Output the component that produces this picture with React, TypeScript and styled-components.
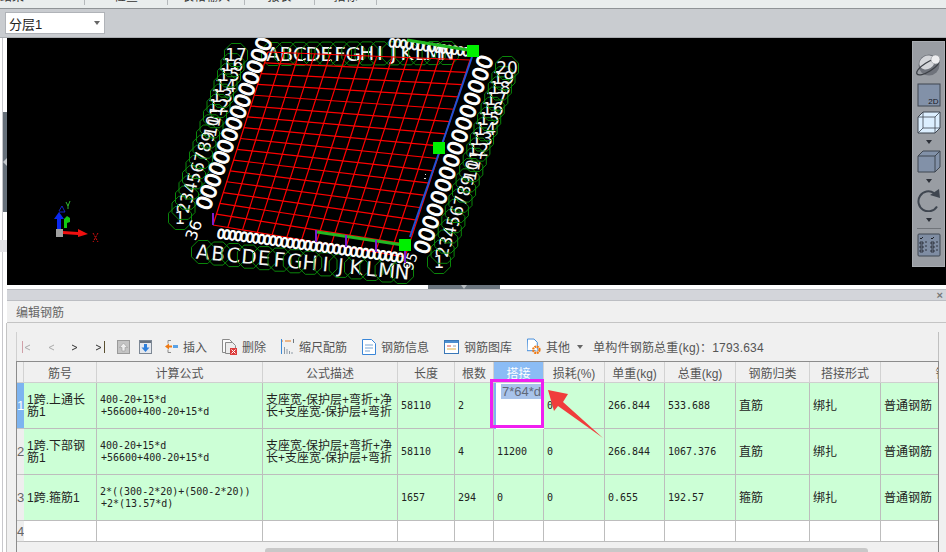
import React from 'react';
import styled, { createGlobalStyle } from 'styled-components';

const CJK = '"Liberation Sans", "Noto Sans CJK SC", sans-serif';
const MONO = '"DejaVu Sans Mono", "Noto Sans CJK SC", monospace';
const COLS = '7px 73px 166px 135px 57px 39px 50px 61px 60px 71px 74px 71px 158px';

const GlobalStyle = createGlobalStyle`
  html, body { margin: 0; padding: 0; background: #fff; }
  * { box-sizing: border-box; }
`;

const Page = styled.div`
  width: 946px;
  height: 552px;
  overflow: hidden;
  display: flex;
  flex-direction: column;
  font-family: ${CJK};
  font-size: 12px;
  background: #fff;
`;

const TabStrip = styled.div`
  height: 9px;
  display: flex;
  background: #e9eded;
  border-bottom: 1px solid #8f9396;
  overflow: hidden;
`;

const Tab = styled.div<{ $w: number; $left?: boolean }>`
  width: ${(p) => p.$w}px;
  height: 5px;
  border-right: 1px solid #b4b8bb;
  text-align: ${(p) => (p.$left ? 'left' : 'center')};
  color: #333;
  line-height: 12px;
  span {
    display: block;
    margin-top: -9px;
  }
`;

const LayerBar = styled.div`
  height: 29px;
  padding: 3px 5px 0;
  background: #c9ccd0;
  border-bottom: 1px solid #a9acb0;
`;

const LayerSelect = styled.div`
  width: 100px;
  height: 22px;
  background: #fff;
  border: 1px solid #b0b3b8;
  display: flex;
  align-items: center;
  justify-content: space-between;
  padding: 0 4px 0 3px;
  font-size: 13px;
  color: #222;
`;

const Caret = styled.i<{ $color?: string }>`
  display: block;
  width: 0;
  height: 0;
  border-left: 3px solid transparent;
  border-right: 3px solid transparent;
  border-top: 4px solid ${(p) => p.$color || '#666'};
`;

const Main = styled.div`
  flex: 1;
  display: flex;
  min-height: 0;
`;

const SideStrip = styled.div`
  width: 7px;
  padding-left: 2px;
  background: #fff;
`;

const SideRail = styled.div`
  height: 100%;
  border-left: 1px solid #c8c8cc;
  padding-top: 74px;
`;

const SideHandle = styled.div`
  width: 4px;
  height: 100px;
  background: #66707a;
  display: flex;
  align-items: center;
  &::before {
    content: '';
    border-top: 4px solid transparent;
    border-bottom: 4px solid transparent;
    border-right: 4px solid #c4c8cc;
  }
`;

const SideTab = styled.div`
  width: 7px;
  height: 12px;
  margin: 28px 0 0 -3px;
  background: #e2e2e6;
`;

const Content = styled.div`
  flex: 1;
  min-width: 0;
  display: flex;
  flex-direction: column;
`;

const Viewport = styled.div`
  position: relative;
  height: 247px;
  background: #000;
  svg.scene {
    display: block;
  }
`;

const ViewTools = styled.div`
  position: absolute;
  top: 3px;
  right: 1px;
  width: 33px;
  height: 226px;
  padding-top: 9px;
  background: #999da3;
  border: 1px solid #a8acb1;
  display: flex;
  flex-direction: column;
  align-items: center;
  gap: 4px;
`;

const ToolCaret = styled.div`
  height: 8px;
  display: flex;
  align-items: center;
`;

const ToolRule = styled.div`
  width: 24px;
  height: 1px;
  background: #70747a;
`;

const SplitBar = styled.div`
  height: 4px;
  background: #fff;
  padding-left: 421px;
`;

const SplitGrip = styled.div`
  width: 72px;
  height: 4px;
  background: #6d7780;
  display: flex;
  justify-content: center;
`;

const PanelHead = styled.div`
  height: 12px;
  background: #d3d5da;
  border-top: 1px solid #bcbec3;
  border-bottom: 1px solid #bcbec3;
  display: flex;
  justify-content: flex-end;
  align-items: center;
  padding-right: 3px;
  color: #777;
  font-size: 11px;
  font-weight: bold;
  line-height: 10px;
`;

const PanelTitle = styled.div`
  height: 22px;
  background: #f0f0f0;
  border-bottom: 1px solid #c4c4c4;
  padding-left: 9px;
  display: flex;
  align-items: center;
  color: #666;
`;

const PanelBody = styled.div`
  flex: 1;
  background: #f0f0f0;
  padding: 9px 7px 0 9px;
  display: flex;
  flex-direction: column;
  border-left: 1px solid #c4c4c4;
  margin-left: -1px;
`;

const Toolbar = styled.div`
  height: 29px;
  padding-left: 5px;
  display: flex;
  align-items: center;
  gap: 15px;
  border-left: 1px solid #d0d0d0;
  border-right: 1px solid #c0c0c0;
  color: #555;
  white-space: nowrap;
`;

const NavGroup = styled.div`
  display: flex;
  align-items: center;
  margin-right: -16px;
`;

const NavButton = styled.div`
  width: 24px;
  display: flex;
  justify-content: flex-start;
`;

const MoveButton = styled.div`
  display: flex;
  margin-right: -2px;
  svg + svg {
    margin-left: 9px;
  }
`;

const ToolButton = styled.div`
  display: flex;
  align-items: center;
  gap: 5px;
`;

const MoreCaret = styled.span`
  margin: 0 -5px 0 -8px;
`;

const TotalWeight = styled.span`
  letter-spacing: 0.2px;
`;

const TableWrap = styled.div`
  position: relative;
  flex: 1;
  overflow: hidden;
  border-left: 1px solid #8c8c8c;
  border-right: 1px solid #8c8c8c;
  border-top: 1px solid #8c8c8c;
`;

const Row = styled.div<{ $h: number }>`
  display: grid;
  grid-template-columns: ${COLS};
  height: ${(p) => p.$h}px;
`;

const HeadCell = styled.div<{ $active?: boolean }>`
  display: flex;
  align-items: center;
  justify-content: center;
  white-space: nowrap;
  overflow: hidden;
  background: ${(p) => (p.$active ? '#8bbcf5' : '#f0f0f0')};
  color: ${(p) => (p.$active ? '#fff' : '#555')};
  border-right: 1px solid #d2d2d2;
  border-bottom: 1px solid #cfcfcf;
`;

const RowNo = styled.div<{ $active?: boolean }>`
  display: flex;
  align-items: center;
  justify-content: center;
  overflow: hidden;
  font-size: 13px;
  background: ${(p) => (p.$active ? '#7db4f0' : '#eeeeee')};
  color: ${(p) => (p.$active ? '#fff' : '#666')};
  border-bottom: 1px solid #c4c4c4;
`;

const Cell = styled.div<{ $mono?: boolean; $empty?: boolean }>`
  display: flex;
  align-items: center;
  padding-left: 3px;
  white-space: nowrap;
  overflow: hidden;
  background: ${(p) => (p.$empty ? '#fff' : '#ccffd6')};
  color: #222;
  font-family: ${(p) => (p.$mono ? MONO : CJK)};
  font-size: ${(p) => (p.$mono ? '10px' : '12px')};
  line-height: 12px;
  border-right: 1px solid #bdbdbd;
  border-bottom: 1px solid #bdbdbd;
`;

const FormulaTail = styled.div`
  padding-left: 1px;
`;

const EditCell = styled.div`
  background: #fff;
  padding: 1px 0 0 5px;
  border-left: 2px solid #7db4f0;
  font-size: 13px;
  line-height: 15px;
  color: #5f6878;
`;

const Selected = styled.span`
  display: inline-block;
  background: #a8c3ea;
  padding: 0 1px;
`;

const Highlight = styled.div`
  position: absolute;
  left: 473px;
  top: 17px;
  width: 54px;
  height: 49px;
  border: 3px solid #f01ff0;
`;

const Pointer = styled.svg`
  position: absolute;
  left: 529px;
  top: 24px;
`;

const ScrollThumb = styled.div`
  position: absolute;
  left: 248px;
  top: 186px;
  width: 603px;
  height: 6px;
  background: #c8c8c8;
  border-radius: 3px 3px 0 0;
`;

type Pt = [number, number];

const lerp = (a: Pt, b: Pt, t: number): Pt => [a[0] + (b[0] - a[0]) * t, a[1] + (b[1] - a[1]) * t];

const TL: Pt = [268, 52];
const TR: Pt = [470, 60];
const BL: Pt = [213, 225];
const BR: Pt = [405, 257];

const octagon = ([x, y]: Pt, r: number) =>
  Array.from({ length: 8 }, (_, i) => {
    const a = Math.PI / 8 + (i * Math.PI) / 4;
    return `${(x + r * Math.cos(a)).toFixed(1)},${(y + r * Math.sin(a)).toFixed(1)}`;
  }).join(' ');

const LETTERS = 'ABCDEFGHIJKLMN'.split('');
const NUM = (n: number) => Array.from({ length: n }, (_, i) => String(i + 1));

function Bubbles({ from, to, labels, size, turn }: { from: Pt; to: Pt; labels: string[]; size: number; turn: (i: number) => number }) {
  return (
    <>
      {labels.map((label, i) => {
        const p = lerp(from, to, i / (labels.length - 1));
        return (
          <g key={label}>
            <polygon points={octagon(p, 12.5)} fill="none" stroke="#0a860a" strokeWidth="1" />
            <text
              x={p[0]}
              y={p[1]}
              fontSize={size}
              fill="#f4f4f4"
              textAnchor="middle"
              dominantBaseline="central"
              fontFamily='"DejaVu Sans", sans-serif'
              transform={`rotate(${turn(i)} ${p[0]} ${p[1]})`}
            >
              {label}
            </text>
          </g>
        );
      })}
    </>
  );
}

function Zeros({ from, to, n, size, angle, weight }: { from: Pt; to: Pt; n: number; size: number; angle: number; weight: number }) {
  return (
    <>
      {Array.from({ length: n }, (_, i) => {
        const p = lerp(from, to, i / (n - 1));
        return (
          <text
            key={i}
            x={p[0]}
            y={p[1]}
            fontSize={size}
            fill="#fff"
            stroke="#fff"
            strokeWidth={weight}
            textAnchor="middle"
            dominantBaseline="central"
            fontFamily='"DejaVu Sans", sans-serif'
            transform={`rotate(${angle} ${p[0]} ${p[1]})`}
          >
            0
          </text>
        );
      })}
    </>
  );
}

function Scene() {
  const rows = 16;
  const cols = 13;
  const side = (i: number) => (i > 0 && i < 11 ? -80 : 0);
  return (
    <svg className="scene" width="939" height="247" viewBox="7 38 939 247">
      <Bubbles from={[180, 218]} to={[236, 55]} labels={NUM(17)} size={17} turn={side} />
      <Bubbles from={[439, 262]} to={[507, 68]} labels={NUM(20)} size={17} turn={side} />
      <Bubbles from={[273, 54]} to={[447, 53]} labels={LETTERS} size={20} turn={() => 0} />
      <Bubbles from={[203, 252]} to={[402, 272]} labels={LETTERS} size={20} turn={() => 5} />

      {Array.from({ length: rows + 1 }, (_, i) => {
        const a = lerp(TL, BL, i / rows);
        const b = lerp(TR, BR, i / rows);
        return <line key={`h${i}`} x1={a[0]} y1={a[1]} x2={b[0]} y2={b[1]} stroke="#ff0000" strokeWidth="1.2" />;
      })}
      {Array.from({ length: cols + 1 }, (_, i) => {
        const a = lerp(TL, TR, i / cols);
        const b = lerp(BL, BR, i / cols);
        return <line key={`v${i}`} x1={a[0]} y1={a[1]} x2={b[0]} y2={b[1]} stroke="#ff0000" strokeWidth="1.2" />;
      })}

      <Zeros from={[205, 203]} to={[264, 44]} n={15} size={21} angle={-70} weight={1} />
      <Zeros from={[423, 247]} to={[485, 62]} n={16} size={21} angle={-70} weight={1} />
      <Zeros from={[221, 234]} to={[400, 258]} n={32} size={13} angle={8} weight={0.8} />
      <Zeros from={[392, 43]} to={[466, 52]} n={14} size={12} angle={8} weight={0.6} />
      <text x={199} y={232} fontSize="16" fill="#fff" textAnchor="middle" fontFamily='"DejaVu Sans", sans-serif' transform="rotate(-70 199 232)">36</text>
      <text x={415} y={263} fontSize="14" fill="#fff" textAnchor="middle" fontFamily='"DejaVu Sans", sans-serif' transform="rotate(-70 415 263)">95</text>

      <line x1="407" y1="40" x2="468" y2="50" stroke="#22b822" strokeWidth="3" />
      <line x1="317" y1="232" x2="403" y2="245" stroke="#22b822" strokeWidth="3" />
      <line x1="410" y1="237" x2="472" y2="57" stroke="#1f52d8" strokeWidth="2" />
      {[
        [213, 213],
        [316, 230],
        [346, 235],
        [376, 240],
        [405, 251],
      ].map(([x, y]) => (
        <line key={x} x1={x} y1={y} x2={x} y2={y + 12} stroke="#7a1fd0" strokeWidth="2" />
      ))}
      {[
        [473, 51],
        [439, 148],
        [405, 245],
      ].map(([x, y]) => (
        <rect key={x} x={x - 6} y={y - 6} width="12" height="12" fill="#00f000" />
      ))}
      <rect x="425" y="174" width="1" height="1" fill="#ddd" />
      <rect x="424" y="178" width="2" height="1" fill="#ddd" />

      <path d="M64 228v-9l3-3 3 2v4l-3 1v5z" fill="#12c812" />
      <path d="M57 229V219h-3l5-7 5 7h-3v10z" fill="#0a28f0" />
      <rect x="56" y="229" width="7" height="8" fill="#a0a0a0" />
      <path d="M63 231l15 1v-3l10 5-10 3v-2l-15-1z" fill="#f01010" />
      <path d="M59 211l3-5 3 6h-6" fill="none" stroke="#1a2cf0" strokeWidth="0.8" />
      <path d="M66 202l2 4 2-5M68 206v3" fill="none" stroke="#3ce83c" strokeWidth="0.8" />
      <path d="M93 233l5 9M98 233l-5 9" fill="none" stroke="#f01010" strokeWidth="0.9" strokeDasharray="2 1" />
    </svg>
  );
}

const GlobeIcon = () => (
  <svg width="28" height="28" viewBox="0 0 28 28">
    <circle cx="14" cy="14" r="10.5" fill="#6f737b" />
    <ellipse cx="12" cy="11.5" rx="8" ry="6.5" transform="rotate(-32 12 11.5)" fill="#d4d6da" />
    <ellipse cx="13" cy="16" rx="13" ry="4.5" transform="rotate(-32 13 16)" fill="none" stroke="#3c4046" strokeWidth="1.3" />
    <circle cx="20.5" cy="8.5" r="4.5" fill="#eeeef0" stroke="#8a8e94" strokeWidth="0.6" />
  </svg>
);

const ViewBox2D = () => (
  <svg width="24" height="24" viewBox="0 0 24 24">
    <rect x="1" y="1" width="22" height="22" fill="#8291a8" stroke="#3f4650" />
    <text x="21.5" y="21" fontSize="8" textAnchor="end" fill="#14181e" fontFamily='"Liberation Sans", sans-serif'>2D</text>
  </svg>
);

const WireCube = () => (
  <svg width="24" height="23" viewBox="0 0 24 23">
    <path d="M1 6l5-5h17v16l-5 5H1z" fill="#dcefff" stroke="#3f4650" />
    <path d="M1 6h17v16M18 6l5-5M6 1v16h17M6 17l-5 5" fill="none" stroke="#3f4650" strokeWidth="0.8" />
  </svg>
);

const SolidCube = () => (
  <svg width="24" height="23" viewBox="0 0 24 23">
    <path d="M1 6l5-5h17v16l-5 5H1z" fill="#8291a8" stroke="#3f4650" />
    <path d="M1 6h17v16M18 6l5-5" fill="none" stroke="#3f4650" />
  </svg>
);

const RotateIcon = () => (
  <svg width="24" height="23" viewBox="0 0 24 23">
    <path d="M20 17.5a10 10 0 1 1 -3 -13.5" fill="none" stroke="#3f4650" strokeWidth="2" />
    <path d="M13 6l10 3-1-9z" fill="#3f4650" />
  </svg>
);

const TableIcon = () => (
  <svg width="24" height="24" viewBox="0 0 24 24">
    <rect x="1" y="1" width="22" height="22" rx="1" fill="#7f8da3" stroke="#3f4650" />
    <path d="M3 5l1 1 2-2M14 5l1 1 2-2" fill="none" stroke="#1c2026" />
    <path d="M3 9h3v2H3zM8 9h2M3 13h3v2H3zM8 13h2M3 17h3v2H3zM8 17h2M14 9h3v2h-3zM19 9h2M14 13h3v2h-3zM19 13h2M14 17h3v2h-3zM19 17h2" fill="none" stroke="#1c2026" strokeWidth="0.8" />
  </svg>
);

const NavIcon = ({ dir, bar, color, barColor }: { dir: 'l' | 'r'; bar?: boolean; color: string; barColor?: string }) => (
  <svg width="11" height="12" viewBox="0 0 11 12">
    <path d={dir === 'l' ? 'M8 4L3 6.5 8 9' : 'M2 4L7 6.5 2 9'} fill="none" stroke={color} />
    {bar && <path d={dir === 'l' ? 'M0.5 0v12' : 'M10.5 0v12'} stroke={barColor} />}
  </svg>
);

const UpIcon = () => (
  <svg width="13" height="14" viewBox="0 0 13 14">
    <rect x="0.5" y="0.5" width="12" height="13" fill="#c4c4c4" stroke="#9a9a9a" />
    <path d="M6.5 3L10.5 7.5H8V11H5V7.5H2.5z" fill="#eeeeee" stroke="#999" strokeWidth="0.6" />
  </svg>
);

const DownIcon = () => (
  <svg width="13" height="14" viewBox="0 0 13 14">
    <rect x="0.5" y="0.5" width="12" height="13" fill="#e4e8ee" stroke="#7c8794" />
    <rect x="1" y="1" width="11" height="2" fill="#67727f" />
    <path d="M6.5 12L10.5 7.5H8V4H5V7.5H2.5z" fill="#2d7fdc" />
  </svg>
);

const InsertIcon = () => (
  <svg width="13" height="15" viewBox="0 0 13 15">
    <path d="M6 1.5h-3v3M3 10.5v3h3" fill="none" stroke="#8a8a8a" />
    <path d="M0 7.5l4-3v2h3v2H4v2z" fill="#ee7a14" />
    <rect x="8" y="6" width="5" height="3" fill="#5aa2e6" />
  </svg>
);

const DeleteIcon = () => (
  <svg width="15" height="16" viewBox="0 0 15 16">
    <path d="M0.5 0.5h7l3 3v10h-10z" fill="#fafafa" stroke="#8a8a8a" />
    <path d="M3.5 3.5h7l3 3v8h-10z" fill="#ececec" stroke="#8a8a8a" />
    <rect x="8" y="9" width="7" height="7" fill="#dc3c3c" />
    <path d="M9.5 10.5l4 4M13.5 10.5l-4 4" stroke="#fff" />
  </svg>
);

const RulerIcon = () => (
  <svg width="13" height="15" viewBox="0 0 13 15">
    <path d="M0 2h2M4 2h6" stroke="#e67a1e" />
    <path d="M0.5 0v15" stroke="#3d8ad6" />
    <path d="M3.5 15v-7M6 15v-5M8.5 15v-3M11 15v-2" stroke="#8d9aa6" />
    <path d="M12.5 0v4" stroke="#6d7780" />
  </svg>
);

const DocIcon = () => (
  <svg width="14" height="16" viewBox="0 0 14 16">
    <path d="M0.5 0.5h9l4 4v11h-13z" fill="#fff" stroke="#3a86d8" />
    <path d="M3 6h8M3 9h8M3 12h5" stroke="#7aa6d4" />
  </svg>
);

const LibraryIcon = () => (
  <svg width="15" height="14" viewBox="0 0 15 14">
    <rect x="0.5" y="0.5" width="14" height="13" fill="#fff" stroke="#3a78b8" />
    <rect x="1" y="1" width="13" height="2" fill="#4d8fd0" />
    <path d="M3 6h4" stroke="#d85050" />
    <path d="M3 9h9" stroke="#e0b040" />
    <path d="M9 6h3" stroke="#9aa6b2" />
  </svg>
);

const OtherIcon = () => (
  <svg width="14" height="17" viewBox="0 0 15 17">
    <path d="M0.5 0.5h7l3.5 3.5v9h-11z" fill="#fff" stroke="#3a86d8" />
    <circle cx="10" cy="12" r="3.4" fill="none" stroke="#ee7a14" strokeWidth="2.4" strokeDasharray="2 0.7" />
    <circle cx="10" cy="12" r="1" fill="#fff" />
  </svg>
);

const HEADERS = ['筋号', '计算公式', '公式描述', '长度', '根数', '搭接', '损耗(%)', '单重(kg)', '总重(kg)', '钢筋归类', '搭接形式', '钢筋类型'];
const DESC = (
  <div>
    支座宽-保护层+弯折+净
    <br />
    长+支座宽-保护层+弯折
  </div>
);

const LONG_FORMULA = (
  <div>
    400-20+15*d
    <FormulaTail>+56600+400-20+15*d</FormulaTail>
  </div>
);

const DATA = [
  {
    no: '1',
    name: <div>1跨.上通长<br />筋1</div>,
    formula: LONG_FORMULA,
    desc: DESC,
    length: '58110',
    count: '2',
    lap: '',
    loss: '0',
    unit: '266.844',
    total: '533.688',
    kind: '直筋',
  },
  {
    no: '2',
    name: <div>1跨.下部钢<br />筋1</div>,
    formula: LONG_FORMULA,
    desc: DESC,
    length: '58110',
    count: '4',
    lap: '11200',
    loss: '0',
    unit: '266.844',
    total: '1067.376',
    kind: '直筋',
  },
  {
    no: '3',
    name: <div>1跨.箍筋1</div>,
    formula: (
      <div>
        2*((300-2*20)+(500-2*20))
        <FormulaTail>+2*(13.57*d)</FormulaTail>
      </div>
    ),
    desc: null,
    length: '1657',
    count: '294',
    lap: '0',
    loss: '0',
    unit: '0.655',
    total: '192.57',
    kind: '箍筋',
  },
];

export default function App() {
  return (
    <Page>
      <GlobalStyle />
      <TabStrip>
        <Tab $w={85} $left><span>结果</span></Tab>
        <Tab $w={83}><span>检查</span></Tab>
        <Tab $w={77}><span>表格输入</span></Tab>
        <Tab $w={70}><span>报表</span></Tab>
        <Tab $w={62}><span>指标</span></Tab>
      </TabStrip>
      <LayerBar>
        <LayerSelect>
          分层1
          <Caret />
        </LayerSelect>
      </LayerBar>
      <Main>
        <SideStrip>
          <SideRail>
            <SideHandle />
            <SideTab />
          </SideRail>
        </SideStrip>
        <Content>
          <Viewport>
            <Scene />
            <ViewTools>
              <GlobeIcon />
              <ViewBox2D />
              <WireCube />
              <ToolCaret><Caret $color="#2c3038" /></ToolCaret>
              <SolidCube />
              <ToolCaret><Caret $color="#2c3038" /></ToolCaret>
              <RotateIcon />
              <ToolCaret><Caret $color="#2c3038" /></ToolCaret>
              <ToolRule />
              <TableIcon />
            </ViewTools>
          </Viewport>
          <SplitBar>
            <SplitGrip><Caret $color="#b8bcc0" /></SplitGrip>
          </SplitBar>
          <PanelHead>×</PanelHead>
          <PanelTitle>编辑钢筋</PanelTitle>
          <PanelBody>
            <Toolbar>
              <NavGroup>
                <NavButton><NavIcon dir="l" bar color="#aaa" barColor="#d0a0a8" /></NavButton>
                <NavButton><NavIcon dir="l" color="#aaa" /></NavButton>
                <NavButton><NavIcon dir="r" color="#333" /></NavButton>
                <NavButton><NavIcon dir="r" bar color="#333" barColor="#5a5030" /></NavButton>
              </NavGroup>
              <MoveButton>
                <UpIcon />
                <DownIcon />
              </MoveButton>
              <ToolButton><InsertIcon />插入</ToolButton>
              <ToolButton><DeleteIcon />删除</ToolButton>
              <ToolButton><RulerIcon />缩尺配筋</ToolButton>
              <ToolButton><DocIcon />钢筋信息</ToolButton>
              <ToolButton><LibraryIcon />钢筋图库</ToolButton>
              <ToolButton><OtherIcon />其他</ToolButton>
              <MoreCaret><Caret $color="#666" /></MoreCaret>
              <TotalWeight>单构件钢筋总重(kg)：1793.634</TotalWeight>
            </Toolbar>
            <TableWrap>
              <Row $h={21}>
                <HeadCell />
                {HEADERS.map((h) => (
                  <HeadCell key={h} $active={h === '搭接'}>{h}</HeadCell>
                ))}
              </Row>
              {DATA.map((r) => (
                <Row key={r.no} $h={46}>
                  <RowNo $active={r.no === '1'}>{r.no}</RowNo>
                  <Cell>{r.name}</Cell>
                  <Cell $mono>{r.formula}</Cell>
                  <Cell>{r.desc}</Cell>
                  <Cell $mono>{r.length}</Cell>
                  <Cell $mono>{r.count}</Cell>
                  {r.no === '1' ? (
                    <EditCell><Selected>7*64*d</Selected></EditCell>
                  ) : (
                    <Cell $mono>{r.lap}</Cell>
                  )}
                  <Cell $mono>{r.loss}</Cell>
                  <Cell $mono>{r.unit}</Cell>
                  <Cell $mono>{r.total}</Cell>
                  <Cell>{r.kind}</Cell>
                  <Cell>绑扎</Cell>
                  <Cell>普通钢筋</Cell>
                </Row>
              ))}
              <Row $h={21}>
                <RowNo>4</RowNo>
                {HEADERS.map((h) => (
                  <Cell key={h} $empty />
                ))}
              </Row>
              <Highlight />
              <Pointer width="60" height="56" viewBox="0 0 60 56">
                <path d="M2 4L22 8 17 16 57 52 12 20 8 25z" fill="#f03c3c" />
              </Pointer>
              <ScrollThumb />
            </TableWrap>
          </PanelBody>
        </Content>
      </Main>
    </Page>
  );
}
